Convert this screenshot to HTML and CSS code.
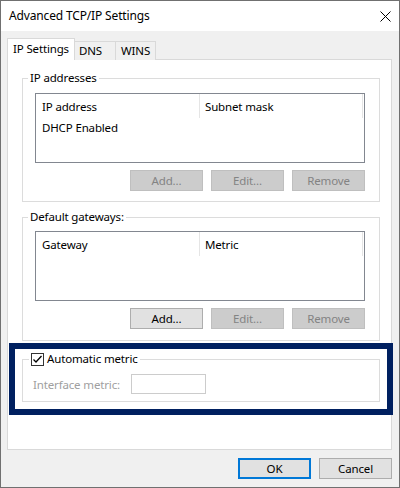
FILE: index.html
```html
<!DOCTYPE html>
<html lang="en">

<head>
  <meta charset="UTF-8" />
  <title>Advanced TCP/IP Settings</title>
  <link rel="stylesheet" href="styles.css">
</head>

<body>

  <div class="window">
    <!-- Title bar -->
    <div class="titlebar">
      <span class="title">Advanced TCP/IP Settings</span>
      <svg class="close" width="11" height="11" viewBox="0 0 11 11">
        <path d="M0.5 0.5 L10.5 10.5 M10.5 0.5 L0.5 10.5" stroke="#000" stroke-width="1" fill="none" />
      </svg>
    </div>

    <div class="content">
      <div class="tabs">
        <div class="tab active">IP Settings</div>
        <div class="tab dns">DNS</div>
        <div class="tab wins">WINS</div>
      </div>

      <div class="panel">
        <!-- IP addresses -->
        <fieldset class="group">
          <legend>IP addresses</legend>
          <div class="group-body">
            <div class="listview">
              <div class="lv-header">
                <div class="lv-col">IP address</div>
                <div class="lv-col">Subnet mask</div>
              </div>
              <div class="lv-row">DHCP Enabled</div>
            </div>
            <div class="btn-row">
              <button class="btn" disabled>Add...</button>
              <button class="btn" disabled>Edit...</button>
              <button class="btn" disabled>Remove</button>
            </div>
          </div>
        </fieldset>

        <!-- Default gateways -->
        <fieldset class="group gateways">
          <legend>Default gateways:</legend>
          <div class="group-body">
            <div class="listview">
              <div class="lv-header">
                <div class="lv-col">Gateway</div>
                <div class="lv-col">Metric</div>
              </div>
            </div>
            <div class="btn-row">
              <button class="btn">Add...</button>
              <button class="btn" disabled>Edit...</button>
              <button class="btn" disabled>Remove</button>
            </div>
          </div>
        </fieldset>

        <!-- Highlighted: automatic metric -->
        <div class="highlight">
          <fieldset class="group metric">
            <legend>
              <svg class="checkbox" width="13" height="13" viewBox="0 0 13 13">
                <rect x="0.5" y="0.5" width="12" height="12" fill="#fff" stroke="#333" />
                <path d="M2.5 6.5 L5 9 L10.5 3" stroke="#000" stroke-width="1.3" fill="none" />
              </svg>
              <span>Automatic metric</span>
            </legend>
            <div class="group-body">
              <span class="field-label">Interface metric:</span>
              <input class="textbox" type="text" disabled>
            </div>
          </fieldset>
        </div>
      </div>

      <div class="dialog-buttons">
        <button class="btn default">OK</button>
        <button class="btn">Cancel</button>
      </div>
    </div>
  </div>

</body>

</html>
```

FILE: styles.css
```css
* {
  box-sizing: border-box;
}

body {
  margin: 0;
  font-family: 'Segoe UI', 'Noto Sans', sans-serif;
  font-size: 11.5px;
  letter-spacing: -0.15px;
  color: #000;
}

.window {
  width: 400px;
  height: 488px;
  border: 1px solid #707070;
  background-color: #f0f0f0;
  display: flex;
  flex-direction: column;
}

.titlebar {
  height: 30px;
  background-color: #fff;
  display: flex;
  align-items: center;
  justify-content: space-between;
  padding: 0 8px 0 8px;
}

.title {
  font-size: 12px;
  line-height: 16px;
}

.content {
  padding: 7px 7px 0 6px;
}

/* Tabs */
.tabs {
  display: flex;
  align-items: flex-end;
  height: 22px;
  margin-bottom: -1px;
}

.tab {
  height: 19px;
  line-height: 17px;
  background-color: #f0f0f0;
  border-top: 1px solid #d9d9d9;
  border-right: 1px solid #d9d9d9;
}

.tab.dns {
  width: 41px;
  padding-left: 4px;
}

.tab.wins {
  width: 40px;
  padding-left: 5px;
}

.tab.active {
  position: relative;
  z-index: 1;
  width: 68px;
  height: 22px;
  line-height: 19px;
  text-align: center;
  background-color: #fff;
  border: 1px solid #d9d9d9;
  border-bottom: none;
}

.panel {
  height: 391px;
  background-color: #fff;
  border: 1px solid #d9d9d9;
  padding: 10px 11px 0 14px;
}

/* Group boxes */
.group {
  margin: 0;
  padding: 0;
  min-width: 0;
  border: 1px solid #dcdcdc;
}

.group legend {
  margin-left: 5px;
  padding: 0 2px;
  line-height: 16px;
}

.group-body {
  padding: 7px 14px 10px 12px;
}

.gateways {
  margin-top: 7px;
}

.gateways .group-body {
  padding-top: 6px;
  padding-bottom: 11px;
}

.listview {
  height: 70px;
  border: 1px solid #828790;
  background-color: #fff;
}

.lv-header {
  display: flex;
  height: 24px;
}

.lv-col {
  width: 164px;
  padding: 1px 0 0 6px;
  line-height: 23px;
  border-right: 1px solid #e5e5e5;
}

.lv-col + .lv-col {
  width: 163px;
  padding-left: 5px;
}

.lv-row {
  padding: 1px 0 0 6px;
  line-height: 17px;
}

.btn-row {
  display: flex;
  justify-content: flex-end;
  gap: 8px;
  margin-top: 7px;
}

.btn {
  width: 73px;
  height: 21px;
  padding: 0;
  font-family: inherit;
  font-size: 11.5px;
  letter-spacing: -0.15px;
  color: #000;
  background-color: #e1e1e1;
  border: 1px solid #adadad;
}

.btn:disabled {
  color: #838383;
  background-color: #cccccc;
  border-color: #bfbfbf;
}

.btn.default {
  border: 2px solid #0078d7;
}

/* Annotation box around the metric group */
.highlight {
  margin: 2px -13px 0 -13px;
  padding: 2px 7px 7px 7px;
  border: 6px solid #002060;
}

.metric legend {
  display: flex;
  align-items: center;
  gap: 3px;
  margin-left: 6px;
}

.metric .group-body {
  display: flex;
  align-items: center;
  padding: 7px 10px 7px 10px;
}

.field-label {
  width: 98px;
  color: #a0a0a0;
}

.textbox {
  width: 75px;
  height: 20px;
  margin: 0;
  border: 1px solid #cccccc;
  background-color: #fff;
}

.dialog-buttons {
  display: flex;
  justify-content: flex-end;
  gap: 8px;
  margin-top: 8px;
}
```
